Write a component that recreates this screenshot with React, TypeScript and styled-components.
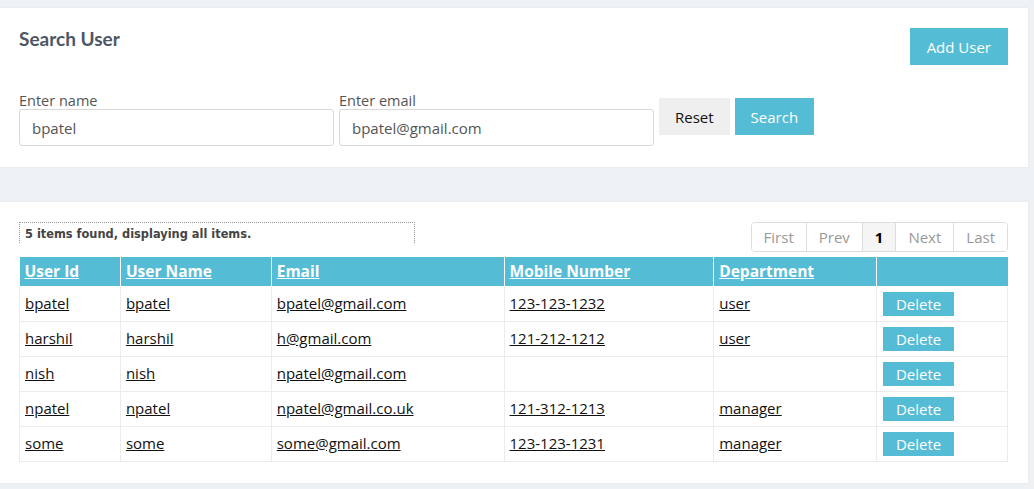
import React from "react";
import styled, { createGlobalStyle } from "styled-components";

const accent = "#54bcd4";

const GlobalStyle = createGlobalStyle`
	html, body {
		margin: 0;
		padding: 0;
		background: #eef2f5;
		font-family: "Open Sans", "Noto Sans", sans-serif;
	}
`;

const Page = styled.div`
	padding: 8px 6px 6px 0;
	display: flex;
	flex-direction: column;
	gap: 35px;
`;

const Card = styled.section`
	background: #fff;
	box-shadow: 0 0 3px rgba(0, 0, 0, 0.06);
	padding: ${(p: { $pad: string }) => p.$pad};
`;

const Header = styled.div`
	display: flex;
	justify-content: space-between;
	align-items: flex-start;
	height: 37px;
`;

const Title = styled.h2`
	margin: 0;
	font-family: Lato, sans-serif;
	font-weight: 700;
	font-size: 19px;
	line-height: 22px;
	color: #4d5664;
`;

const Button = styled.button<{ $tone?: "primary" | "plain" }>`
	border: 0;
	border-radius: 0;
	height: 37px;
	padding: 0 17px;
	font-family: inherit;
	font-size: 15px;
	background: ${(p) => (p.$tone === "plain" ? "#efefef" : accent)};
	color: ${(p) => (p.$tone === "plain" ? "#111" : "#fff")};
	cursor: pointer;
`;

const FormRow = styled.div`
	display: flex;
	align-items: flex-end;
	gap: 5px;
	margin-top: 28px;
`;

const Field = styled.label`
	display: flex;
	flex-direction: column;
	font-size: 14.5px;
	line-height: 16px;
	color: #555;
`;

const Input = styled.input`
	box-sizing: border-box;
	width: 315px;
	height: 37px;
	padding: 0 12px;
	border: 1px solid #d9d9d9;
	border-radius: 3px;
	font-family: inherit;
	font-size: 15px;
	color: #555;
	outline: none;
`;

const ActionButton = styled(Button)`
	margin-bottom: 11px;
	padding: 0 16px;
`;

const Toolbar = styled.div`
	display: flex;
	justify-content: space-between;
	align-items: flex-start;
	margin-bottom: 5px;
`;

const Info = styled.div`
	box-sizing: border-box;
	width: 396px;
	height: 21px;
	padding: 0 5px;
	border: 1px dotted #999;
	border-bottom: 0;
	font-family: "DejaVu Sans", Verdana, sans-serif;
	font-size: 11.4px;
	font-weight: 700;
	line-height: 22px;
	color: #444;
`;

const Pager = styled.div`
	display: flex;
	border: 1px solid #ddd;
	border-radius: 4px;
	overflow: hidden;
	height: 28px;
`;

const PageLink = styled.span<{ $active?: boolean }>`
	display: flex;
	align-items: center;
	justify-content: center;
	padding: 0 12px;
	font-size: 15px;
	color: ${(p) => (p.$active ? "#000" : "#999")};
	font-weight: ${(p) => (p.$active ? 700 : 400)};
	background: ${(p) => (p.$active ? "#f5f5f5" : "#fff")};
	& + & {
		border-left: 1px solid #ddd;
	}
`;

const Table = styled.table`
	width: 100%;
	border-collapse: collapse;
	font-size: 15px;
`;

const Th = styled.th`
	background: ${accent};
	border: 1px solid #fff;
	border-top: 0;
	height: 28px;
	padding: 0 5px 1px;
	text-align: left;
	font-size: 15.5px;
	& a {
		color: #fff;
		font-weight: 700;
	}
	&:first-child {
		border-left: 0;
	}
	&:last-child {
		border-right: 0;
	}
`;

const Td = styled.td`
	border: 1px solid #ebebeb;
	height: 31px;
	padding: 0 5px 3px;
	& a {
		color: #111;
	}
`;

const DeleteButton = styled.button`
	display: block;
	border: 0;
	width: 71px;
	height: 24px;
	margin: 3px 0 0 1px;
	background: ${accent};
	color: #fff;
	font-family: inherit;
	font-size: 15px;
	padding: 0;
	cursor: pointer;
`;

type User = {
	id: string;
	name: string;
	email: string;
	mobile: string;
	dept: string;
};

const users: User[] = [
	{ id: "bpatel", name: "bpatel", email: "bpatel@gmail.com", mobile: "123-123-1232", dept: "user" },
	{ id: "harshil", name: "harshil", email: "h@gmail.com", mobile: "121-212-1212", dept: "user" },
	{ id: "nish", name: "nish", email: "npatel@gmail.com", mobile: "", dept: "" },
	{ id: "npatel", name: "npatel", email: "npatel@gmail.co.uk", mobile: "121-312-1213", dept: "manager" },
	{ id: "some", name: "some", email: "some@gmail.com", mobile: "123-123-1231", dept: "manager" },
];

const columns = [
	{ label: "User Id", width: 101 },
	{ label: "User Name", width: 151 },
	{ label: "Email", width: 233 },
	{ label: "Mobile Number", width: 210 },
	{ label: "Department", width: 163 },
	{ label: "", width: 131 },
];

const App: React.FC = () => {
	return (
		<>
			<GlobalStyle />
			<Page>
				<Card $pad="20px 20px 21px 19px">
					<Header>
						<Title>Search User</Title>
						<Button>Add User</Button>
					</Header>
					<FormRow>
						<Field>
							Enter name
							<Input defaultValue="bpatel" />
						</Field>
						<Field>
							Enter email
							<Input defaultValue="bpatel@gmail.com" />
						</Field>
						<ActionButton $tone="plain">Reset</ActionButton>
						<ActionButton>Search</ActionButton>
					</FormRow>
				</Card>

				<Card $pad="20px 20px 21px 19px">
					<Toolbar>
						<Info>5 items found, displaying all items.</Info>
						<Pager>
							<PageLink>First</PageLink>
							<PageLink>Prev</PageLink>
							<PageLink $active>1</PageLink>
							<PageLink>Next</PageLink>
							<PageLink>Last</PageLink>
						</Pager>
					</Toolbar>
					<Table>
						<colgroup>
							{columns.map((c, i) => (
								<col key={i} style={{ width: c.width }} />
							))}
						</colgroup>
						<thead>
							<tr>
								{columns.map((c, i) => (
									<Th key={i}>{c.label && <a href="#">{c.label}</a>}</Th>
								))}
							</tr>
						</thead>
						<tbody>
							{users.map((u) => (
								<tr key={u.id}>
									<Td><a href="#">{u.id}</a></Td>
									<Td><a href="#">{u.name}</a></Td>
									<Td><a href="#">{u.email}</a></Td>
									<Td>{u.mobile && <a href="#">{u.mobile}</a>}</Td>
									<Td>{u.dept && <a href="#">{u.dept}</a>}</Td>
									<Td><DeleteButton>Delete</DeleteButton></Td>
								</tr>
							))}
						</tbody>
					</Table>
				</Card>
			</Page>
		</>
	);
};

export default App;
